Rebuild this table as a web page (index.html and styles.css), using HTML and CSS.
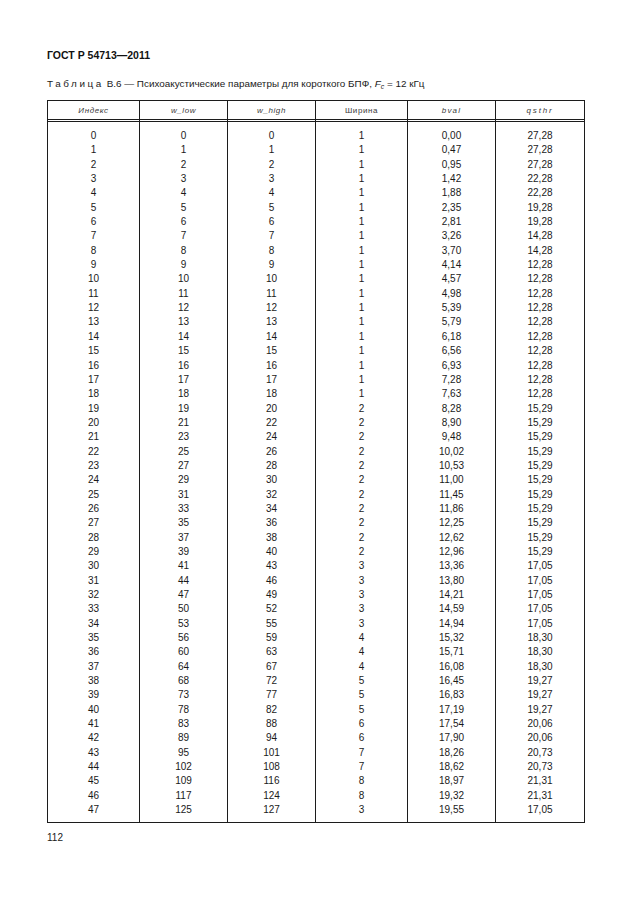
FILE: index.html
```html
<!DOCTYPE html>
<html lang="ru">
<head>
<meta charset="utf-8">
<title>ГОСТ Р 54713—2011</title>
<link rel="stylesheet" href="styles.css">
</head>
<body>
<div class="page">
  <div class="doc-title">ГОСТ Р 54713—2011</div>
  <div class="caption"><span class="spaced">Таблица</span> В.6 — Психоакустические параметры для короткого БПФ, <i>F</i><sub><i>c</i></sub> = 12 кГц</div>
  <table class="data">
    <colgroup>
      <col class="c1"><col class="c2"><col class="c3"><col class="c4"><col class="c5"><col class="c6">
    </colgroup>
    <thead>
      <tr>
        <th class="it">Индекс</th>
        <th class="it">w_low</th>
        <th class="it">w_high</th>
        <th>Ширина</th>
        <th class="it bval">bval</th>
        <th class="it qsthr">qsthr</th>
      </tr>
    </thead>
    <tbody>
      <tr><td>0</td><td>0</td><td>0</td><td>1</td><td>0,00</td><td>27,28</td></tr>
      <tr><td>1</td><td>1</td><td>1</td><td>1</td><td>0,47</td><td>27,28</td></tr>
      <tr><td>2</td><td>2</td><td>2</td><td>1</td><td>0,95</td><td>27,28</td></tr>
      <tr><td>3</td><td>3</td><td>3</td><td>1</td><td>1,42</td><td>22,28</td></tr>
      <tr><td>4</td><td>4</td><td>4</td><td>1</td><td>1,88</td><td>22,28</td></tr>
      <tr><td>5</td><td>5</td><td>5</td><td>1</td><td>2,35</td><td>19,28</td></tr>
      <tr><td>6</td><td>6</td><td>6</td><td>1</td><td>2,81</td><td>19,28</td></tr>
      <tr><td>7</td><td>7</td><td>7</td><td>1</td><td>3,26</td><td>14,28</td></tr>
      <tr><td>8</td><td>8</td><td>8</td><td>1</td><td>3,70</td><td>14,28</td></tr>
      <tr><td>9</td><td>9</td><td>9</td><td>1</td><td>4,14</td><td>12,28</td></tr>
      <tr><td>10</td><td>10</td><td>10</td><td>1</td><td>4,57</td><td>12,28</td></tr>
      <tr><td>11</td><td>11</td><td>11</td><td>1</td><td>4,98</td><td>12,28</td></tr>
      <tr><td>12</td><td>12</td><td>12</td><td>1</td><td>5,39</td><td>12,28</td></tr>
      <tr><td>13</td><td>13</td><td>13</td><td>1</td><td>5,79</td><td>12,28</td></tr>
      <tr><td>14</td><td>14</td><td>14</td><td>1</td><td>6,18</td><td>12,28</td></tr>
      <tr><td>15</td><td>15</td><td>15</td><td>1</td><td>6,56</td><td>12,28</td></tr>
      <tr><td>16</td><td>16</td><td>16</td><td>1</td><td>6,93</td><td>12,28</td></tr>
      <tr><td>17</td><td>17</td><td>17</td><td>1</td><td>7,28</td><td>12,28</td></tr>
      <tr><td>18</td><td>18</td><td>18</td><td>1</td><td>7,63</td><td>12,28</td></tr>
      <tr><td>19</td><td>19</td><td>20</td><td>2</td><td>8,28</td><td>15,29</td></tr>
      <tr><td>20</td><td>21</td><td>22</td><td>2</td><td>8,90</td><td>15,29</td></tr>
      <tr><td>21</td><td>23</td><td>24</td><td>2</td><td>9,48</td><td>15,29</td></tr>
      <tr><td>22</td><td>25</td><td>26</td><td>2</td><td>10,02</td><td>15,29</td></tr>
      <tr><td>23</td><td>27</td><td>28</td><td>2</td><td>10,53</td><td>15,29</td></tr>
      <tr><td>24</td><td>29</td><td>30</td><td>2</td><td>11,00</td><td>15,29</td></tr>
      <tr><td>25</td><td>31</td><td>32</td><td>2</td><td>11,45</td><td>15,29</td></tr>
      <tr><td>26</td><td>33</td><td>34</td><td>2</td><td>11,86</td><td>15,29</td></tr>
      <tr><td>27</td><td>35</td><td>36</td><td>2</td><td>12,25</td><td>15,29</td></tr>
      <tr><td>28</td><td>37</td><td>38</td><td>2</td><td>12,62</td><td>15,29</td></tr>
      <tr><td>29</td><td>39</td><td>40</td><td>2</td><td>12,96</td><td>15,29</td></tr>
      <tr><td>30</td><td>41</td><td>43</td><td>3</td><td>13,36</td><td>17,05</td></tr>
      <tr><td>31</td><td>44</td><td>46</td><td>3</td><td>13,80</td><td>17,05</td></tr>
      <tr><td>32</td><td>47</td><td>49</td><td>3</td><td>14,21</td><td>17,05</td></tr>
      <tr><td>33</td><td>50</td><td>52</td><td>3</td><td>14,59</td><td>17,05</td></tr>
      <tr><td>34</td><td>53</td><td>55</td><td>3</td><td>14,94</td><td>17,05</td></tr>
      <tr><td>35</td><td>56</td><td>59</td><td>4</td><td>15,32</td><td>18,30</td></tr>
      <tr><td>36</td><td>60</td><td>63</td><td>4</td><td>15,71</td><td>18,30</td></tr>
      <tr><td>37</td><td>64</td><td>67</td><td>4</td><td>16,08</td><td>18,30</td></tr>
      <tr><td>38</td><td>68</td><td>72</td><td>5</td><td>16,45</td><td>19,27</td></tr>
      <tr><td>39</td><td>73</td><td>77</td><td>5</td><td>16,83</td><td>19,27</td></tr>
      <tr><td>40</td><td>78</td><td>82</td><td>5</td><td>17,19</td><td>19,27</td></tr>
      <tr><td>41</td><td>83</td><td>88</td><td>6</td><td>17,54</td><td>20,06</td></tr>
      <tr><td>42</td><td>89</td><td>94</td><td>6</td><td>17,90</td><td>20,06</td></tr>
      <tr><td>43</td><td>95</td><td>101</td><td>7</td><td>18,26</td><td>20,73</td></tr>
      <tr><td>44</td><td>102</td><td>108</td><td>7</td><td>18,62</td><td>20,73</td></tr>
      <tr><td>45</td><td>109</td><td>116</td><td>8</td><td>18,97</td><td>21,31</td></tr>
      <tr><td>46</td><td>117</td><td>124</td><td>8</td><td>19,32</td><td>21,31</td></tr>
      <tr><td>47</td><td>125</td><td>127</td><td>3</td><td>19,55</td><td>17,05</td></tr>
    </tbody>
  </table>
  <div class="page-num">112</div>
</div>
</body>
</html>
```

FILE: styles.css
```css
html, body {
  margin: 0;
  padding: 0;
  background: #ffffff;
}

body {
  font-family: "Liberation Sans", Arial, sans-serif;
  color: #141414;
}

.page {
  width: 630px;
  height: 913px;
  box-sizing: border-box;
  padding: 49px 47px 0 47px;
}

.doc-title {
  font-size: 10.5px;
  line-height: 12px;
  font-weight: bold;
  color: #111;
}

.caption {
  margin-top: 17px;
  font-size: 9.9px;
  line-height: 12px;
  color: #1a1a1a;
}

.caption .spaced {
  letter-spacing: 2.6px;
}

.caption sub {
  font-size: 7px;
  line-height: 0;
  vertical-align: -2px;
}

.data {
  margin-top: 10px;
  width: 536px;
  table-layout: fixed;
  border-collapse: separate;
  border-spacing: 0;
  border: 1px solid #1c1c1c;
}

.c1 { width: 91px; }
.c2 { width: 88px; }
.c3 { width: 88px; }
.c4 { width: 92px; }
.c5 { width: 88px; }
.c6 { width: 89px; }

.data th {
  height: 21px;
  padding: 0;
  font-size: 8px;
  font-weight: normal;
  color: #3a3a3a;
  text-align: center;
  vertical-align: middle;
  letter-spacing: 0.6px;
  border-bottom: 3px double #1c1c1c;
  box-sizing: border-box;
}

.data th.it {
  font-style: italic;
}

.data th.bval {
  letter-spacing: 1.2px;
}

.data th.qsthr {
  letter-spacing: 1.8px;
}

.data th + th,
.data td + td {
  border-left: 1px solid #1c1c1c;
}

.data td {
  padding: 0;
  font-size: 10px;
  line-height: 14.35px;
  text-align: center;
  color: #1a1a1a;
}

.data tbody tr:first-child td {
  padding-top: 7px;
}

.data tbody tr:last-child td {
  padding-bottom: 4.6px;
}

.page-num {
  margin-top: 9px;
  font-size: 10px;
  line-height: 12px;
  color: #1a1a1a;
}
```
